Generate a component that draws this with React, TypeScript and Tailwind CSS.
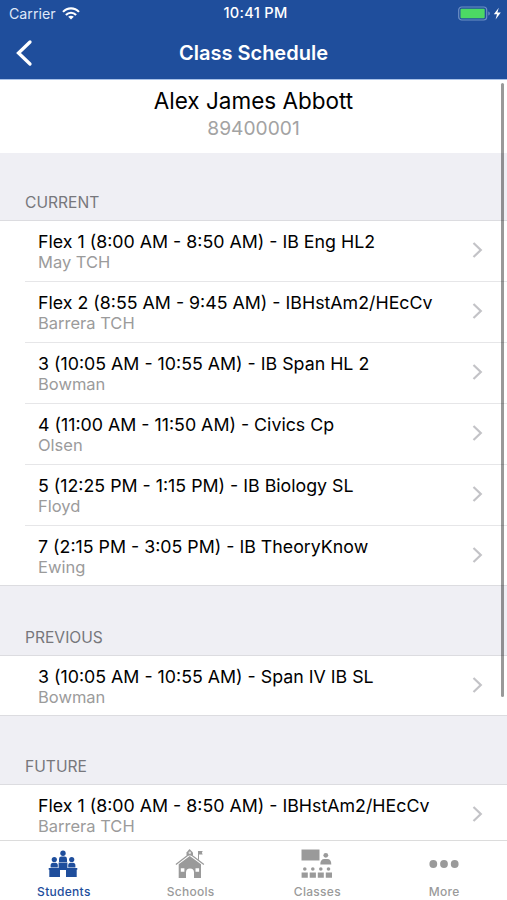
type Course = { title: string; teacher: string };

const current: Course[] = [
  { title: "Flex 1 (8:00 AM - 8:50 AM) - IB Eng HL2", teacher: "May TCH" },
  { title: "Flex 2 (8:55 AM - 9:45 AM) - IBHstAm2/HEcCv", teacher: "Barrera TCH" },
  { title: "3 (10:05 AM - 10:55 AM) - IB Span HL 2", teacher: "Bowman" },
  { title: "4 (11:00 AM - 11:50 AM) - Civics Cp", teacher: "Olsen" },
  { title: "5 (12:25 PM - 1:15 PM) - IB Biology SL", teacher: "Floyd" },
  { title: "7 (2:15 PM - 3:05 PM) - IB TheoryKnow", teacher: "Ewing" },
];
const previous: Course[] = [
  { title: "3 (10:05 AM - 10:55 AM) - Span IV IB SL", teacher: "Bowman" },
];
const future: Course[] = [
  { title: "Flex 1 (8:00 AM - 8:50 AM) - IBHstAm2/HEcCv", teacher: "Barrera TCH" },
];

function Header() {
  return (
    <header className="h-[79px] shrink-0 bg-[#1f4e9c] text-white">
      <div className="grid h-[27px] grid-cols-3 items-center pl-[9px] pr-[5px]">
        <div className="flex items-center gap-[6px]">
          <span className="text-[14.2px] text-[#dfe8f8]">Carrier</span>
          <svg width="18" height="13" viewBox="0 0 18 13" fill="none" stroke="white" strokeWidth="2.1">
            <path d="M1 4.9C5.4.2 12.6.2 17 4.9" />
            <path d="M3.9 8C6.7 5 11.3 5 14.1 8" />
            <path d="M9 12.6 6.2 9.8C7.8 8.3 10.2 8.3 11.8 9.8Z" fill="white" stroke="none" />
          </svg>
        </div>
        <span className="whitespace-nowrap pt-px text-center text-[14.6px] font-medium tracking-[0.3px]">10:41 PM</span>
        <div className="flex items-center justify-end">
          <svg width="44" height="16" viewBox="0 0 44 16">
            <rect x="0.7" y="1" width="28" height="13" rx="3" fill="none" stroke="#6d8fc4" strokeWidth="1.2" />
            <rect x="2.5" y="2.8" width="24.2" height="9.4" rx="1" fill="#4cd964" />
            <path d="M30.3 5.5C32.3 6 32.3 9 30.3 9.5Z" fill="#6d8fc4" />
            <path d="M40.8 1.8 35.8 8.3H39L37.6 13.5 42.8 6.6H39.4Z" fill="white" />
          </svg>
        </div>
      </div>
      <div className="grid h-[51px] grid-cols-[1fr_auto_1fr] items-center">
        <svg
          className="ml-[14px]"
          width="19"
          height="28"
          viewBox="0 0 19 28"
          fill="none"
          stroke="white"
          strokeWidth="3.3"
          strokeLinecap="round"
        >
          <path d="M16 3 4.5 14 16 25" />
        </svg>
        <h1 className="pt-px text-[20px] font-semibold">Class Schedule</h1>
      </div>
    </header>
  );
}

function Section({ name, courses, height }: { name: string; courses: Course[]; height: string }) {
  return (
    <section>
      <h2
        className={`flex items-end border-b border-[#dcdce0] bg-[#efeff4] pb-[6px] pl-[25px] text-[15.6px] leading-[22px] text-[#77777c] ${height}`}
      >
        {name}
      </h2>
      <ul className="border-b border-[#dcdce0]">
        {courses.map((course) => (
          <li key={course.title} className="group h-[61px] bg-white pl-[25px] last:h-[59px]">
            <div className="flex h-[61px] items-center justify-between border-b border-[#e6e6e8] pl-[13px] pr-[24px] group-last:h-[60px] group-last:border-0">
              <div>
                <p className="pt-px text-[17.8px] leading-[21px] text-black">{course.title}</p>
                <p className="text-[16.5px] leading-[20px] text-[#9b9b9b]">{course.teacher}</p>
              </div>
              <svg className="mb-[2px]" width="11" height="16" viewBox="0 0 11 16" fill="none" stroke="#c3c3c7" strokeWidth="2.2">
                <path d="M1.5 1 8.8 8 1.5 15" />
              </svg>
            </div>
          </li>
        ))}
      </ul>
    </section>
  );
}

function StudentsIcon() {
  return (
    <svg width="30" height="28" viewBox="0 0 30 28" fill="currentColor">
      <circle cx="15" cy="3.2" r="2.7" />
      <path d="M11 12V9q0-2.4 2.4-2.4h3.2Q19 6.6 19 9v3Z" />
      <path d="M10.6 12.6h8.8V18h-8.8Z" />
      <circle cx="6.3" cy="9.5" r="2.6" />
      <path d="M2.6 17.4V15.500q0-2.700 2.600-2.700h2.200q2.400 0 2.400 2.700v1.900Z" />
      <circle cx="23.7" cy="9.5" r="2.6" />
      <path d="M20.2 17.4V15.500q0-2.700 2.400-2.700h2.200q2.600 0 2.600 2.700v1.900Z" />
      <path d="M.7 18H29.300v1.800h-.6V27H18v-7h-6v7H1.300v-7.200H.7Z" />
    </svg>
  );
}

function SchoolsIcon() {
  return (
    <svg width="30" height="32" viewBox="0 0 30 32" fill="currentColor">
      <path d="M23 3h4.700l-.8 1.700.8 1.800H24v5.200h-1Z" />
      <path d="M11.500 7.400V4.500L14.500 1l3.500 3.500v2.900Z" />
      <path d="M.9 16.500 14.800 5.700 28.900 16.500" fill="none" stroke="currentColor" strokeWidth="1.3" />
      <path
        fillRule="evenodd"
        d="M3.700 16.300 14.800 8 26 16.300V30h-7v-5.500q0-4-4-4t-4 4V30H3.700ZM5.800 20.300v3.400h3.600v-3.400ZM20.500 20.300v3.400h3.600v-3.400Z"
      />
      <circle cx="14.8" cy="4.7" r="1.3" fill="white" opacity=".7" />
    </svg>
  );
}

function ClassesIcon() {
  return (
    <svg width="32" height="30" viewBox="0 0 32 30" fill="currentColor">
      <path d="M.5.5h18v11H.5Z" />
      <circle cx="24.8" cy="6.3" r="2.4" />
      <path d="M19.300 15.500q0-5.500 4-5.500h3q4 0 4 5.500Z" />
      <circle cx="3.8" cy="20" r="1.8" />
      <circle cx="11.8" cy="20" r="1.8" />
      <circle cx="19.8" cy="20" r="1.8" />
      <circle cx="27.5" cy="20" r="1.8" />
      <path d="M.6 23.500h6.200v5.200H.6ZM8.700 23.500h6.200v5.200H8.700ZM16.800 23.500h6v5.200h-6ZM24.800 23.500h6.200v5.200h-6.200Z" />
    </svg>
  );
}

function MoreIcon() {
  return (
    <svg width="30" height="8" viewBox="0 0 30 8" fill="currentColor">
      <circle cx="4.3" cy="4" r="3.9" />
      <circle cx="15" cy="4" r="3.9" />
      <circle cx="25.7" cy="4" r="3.9" />
    </svg>
  );
}

const tabs = [
  { label: "Students", icon: <StudentsIcon />, active: true },
  { label: "Schools", icon: <SchoolsIcon /> },
  { label: "Classes", icon: <ClassesIcon /> },
  { label: "More", icon: <MoreIcon /> },
];

export default function App() {
  return (
    <div className="flex h-[900px] w-[507px] flex-col overflow-hidden bg-white font-['Inter',sans-serif]">
      <Header />
      <main className="relative min-h-0 flex-1 overflow-hidden">
        <div className="h-[74px] border-t border-[#a9c2e8] bg-white pt-[6px] text-center">
          <p className="text-[22.5px] leading-[30px] text-black">Alex James Abbott</p>
          <p className="text-[19.2px] leading-[25px] text-[#a3a3a3]">89400001</p>
        </div>
        <Section name="CURRENT" courses={current} height="h-[68px]" />
        <Section name="PREVIOUS" courses={previous} height="h-[70px]" />
        <Section name="FUTURE" courses={future} height="h-[69px]" />
        <div className="absolute right-[3px] top-[4px] h-[614px] w-[3px] rounded-full bg-black/40" />
      </main>
      <nav className="grid h-[60px] shrink-0 grid-cols-4 border-t border-[#dcdcdc] bg-white">
        {tabs.map((tab) => (
          <button
            key={tab.label}
            className={`flex flex-col items-center ${tab.active ? "text-[#1f4e9c]" : "text-[#9a9a9a]"}`}
          >
            <span className="flex h-[43px] items-center pt-[2px]">{tab.icon}</span>
            <span className="pl-px text-[12px] font-medium leading-[16px] tracking-[0.3px]">{tab.label}</span>
          </button>
        ))}
      </nav>
    </div>
  );
}
